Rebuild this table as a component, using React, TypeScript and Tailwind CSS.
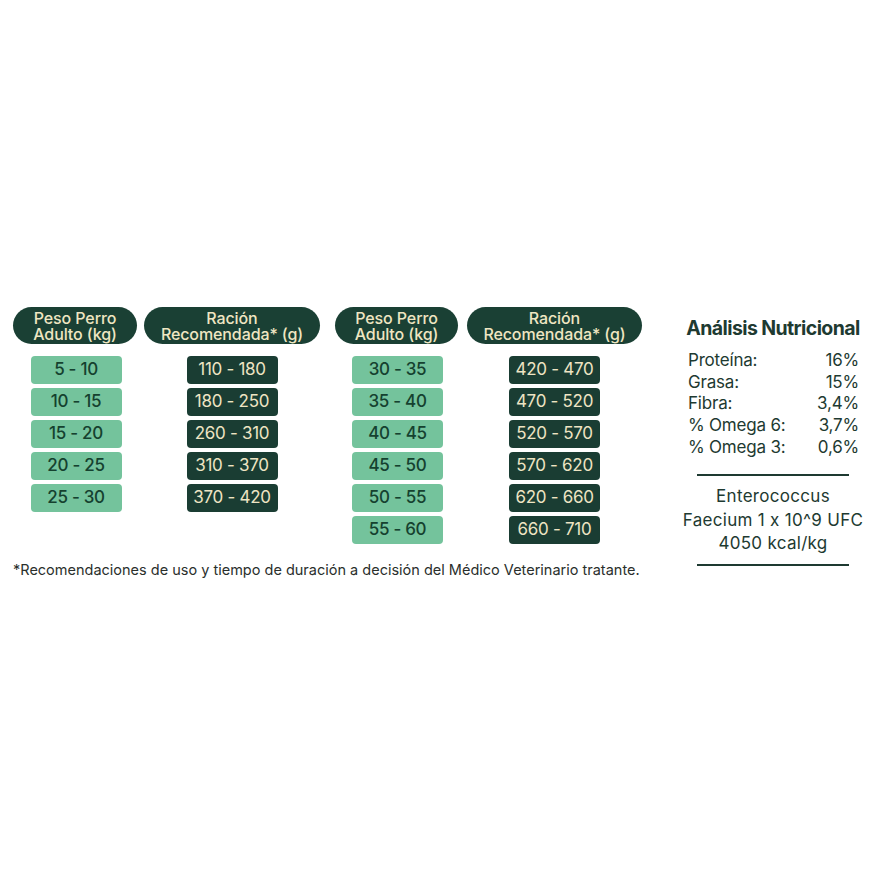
import React from "react";

const col1 = ["5 - 10", "10 - 15", "15 - 20", "20 - 25", "25 - 30"];
const col2 = ["110 - 180", "180 - 250", "260 - 310", "310 - 370", "370 - 420"];
const col3 = ["30 - 35", "35 - 40", "40 - 45", "45 - 50", "50 - 55", "55 - 60"];
const col4 = ["420 - 470", "470 - 520", "520 - 570", "570 - 620", "620 - 660", "660 - 710"];

function Header({ l1, l2, w }: { l1: string; l2: string; w: string }) {
  return (
    <div
      className={`${w} h-[37px] rounded-full bg-[#1a4034] text-[#efe6c2] flex items-center justify-center`}
    >
      <p className="text-center text-[16px] leading-[16px] font-medium tracking-[-0.1px]">
        {l1}
        <br />
        {l2}
      </p>
    </div>
  );
}

function Box({ t, dark }: { t: string; dark?: boolean }) {
  return (
    <div
      className={
        dark
          ? "w-[91px] h-[28px] rounded-[4px] bg-[#1a3d33] text-[#eee4c3] flex items-center justify-center text-[17px] tracking-[-0.3px]"
          : "w-[91px] h-[28px] rounded-[4px] bg-[#74c39c] text-[#15412f] flex items-center justify-center text-[17px] font-medium tracking-[-0.3px]"
      }
    >
      {t}
    </div>
  );
}

function Row({ k, v }: { k: string; v: string }) {
  return (
    <div className="flex justify-between h-[21.7px] items-center">
      <span>{k}</span>
      <span>{v}</span>
    </div>
  );
}

export default function App() {
  return (
    <div className="w-[870px] h-[870px] bg-white font-['Inter',sans-serif] pt-[307px] relative">
      <div className="flex items-start">
        <div className="ml-[13px]">
          <div className="flex items-start">
            <div className="w-[124px] flex flex-col items-center">
              <Header l1="Peso Perro" l2="Adulto (kg)" w="w-[124px]" />
              <div className="mt-[12px] flex flex-col gap-[4px] pl-[2px]">
                {col1.map((t) => (
                  <Box key={t} t={t} />
                ))}
              </div>
            </div>
            <div className="ml-[7px] w-[176px] flex flex-col items-center">
              <Header l1="Ración" l2="Recomendada* (g)" w="w-[176px]" />
              <div className="mt-[12px] flex flex-col gap-[4px]">
                {col2.map((t) => (
                  <Box key={t} t={t} dark />
                ))}
              </div>
            </div>
            <div className="ml-[15px] w-[123px] flex flex-col items-center">
              <Header l1="Peso Perro" l2="Adulto (kg)" w="w-[123px]" />
              <div className="mt-[12px] flex flex-col gap-[4px] pl-[2px]">
                {col3.map((t) => (
                  <Box key={t} t={t} />
                ))}
              </div>
            </div>
            <div className="ml-[9px] w-[175px] flex flex-col items-center">
              <Header l1="Ración" l2="Recomendada* (g)" w="w-[175px]" />
              <div className="mt-[12px] flex flex-col gap-[4px]">
                {col4.map((t) => (
                  <Box key={t} t={t} dark />
                ))}
              </div>
            </div>
          </div>
          <p className="mt-[17px] text-[14.5px] leading-[18px] text-[#2a2f2c] tracking-[0px]">
            *Recomendaciones de uso y tiempo de duración a decisión del Médico Veterinario tratante.
          </p>
        </div>
        <div className="ml-[37px] w-[188px] pt-[9px] text-[#1e3a31]">
          <div className="text-[19.5px] leading-[24px] font-bold tracking-[-0.6px] text-center">
            Análisis Nutricional
          </div>
          <div className="mt-[10px] pl-[9px] pr-[8px] text-[17px] tracking-[-0.2px]">
            <Row k="Proteína:" v="16%" />
            <Row k="Grasa:" v="15%" />
            <Row k="Fibra:" v="3,4%" />
            <Row k="% Omega 6:" v="3,7%" />
            <Row k="% Omega 3:" v="0,6%" />
          </div>
          <div className="mx-auto mt-[16px] w-[152px] h-[2px] bg-[#1e3a31]" />
          <div className="mt-[9px] text-center text-[17px] leading-[23.5px] tracking-[0.3px] whitespace-nowrap">
            <div>Enterococcus</div>
            <div>Faecium 1 x 10^9 UFC</div>
            <div>4050 kcal/kg</div>
          </div>
          <div className="mx-auto mt-[8px] w-[152px] h-[2px] bg-[#1e3a31]" />
        </div>
      </div>
    </div>
  );
}
